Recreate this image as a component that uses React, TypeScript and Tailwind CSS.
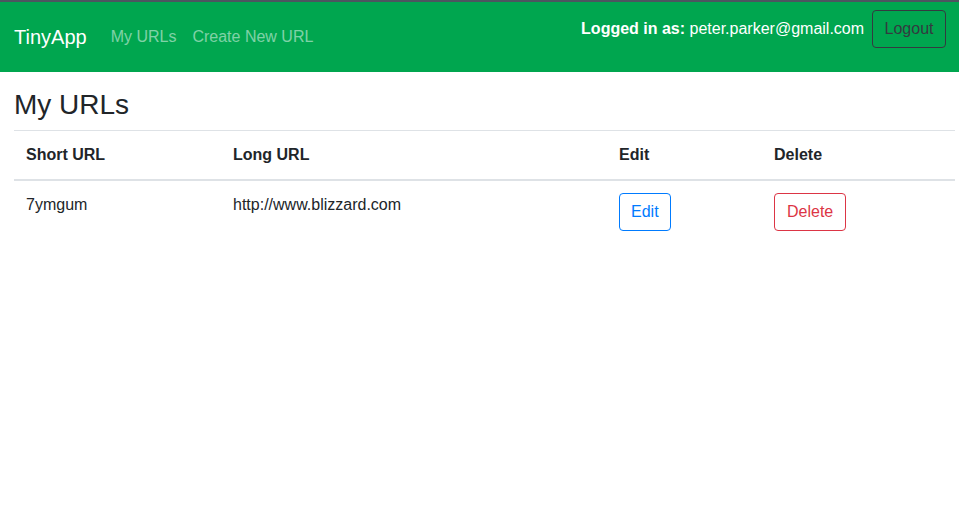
export default function App() {
  const rows = [{ short: "7ymgum", long: "http://www.blizzard.com" }]

  return (
    <div className="min-h-screen bg-white text-[#212529] font-['Liberation_Sans',Arial,sans-serif] text-base leading-6">
      <nav className="h-[72px] bg-[#00a64f] border-t-2 border-[#4d5560] pl-[14px] pr-[13px] flex justify-between">
        <div className="flex items-center self-center">
          <span className="text-white text-xl leading-[30px] py-[5px] mr-4">TinyApp</span>
          <a className="px-2 py-2 text-white/50">My URLs</a>
          <a className="px-2 py-2 text-white/50">Create New URL</a>
        </div>
        <div className="flex items-center pt-[8px] self-start gap-2">
          <span className="text-white">
            <b>Logged in as:</b> peter.parker@gmail.com
          </span>
          <button className="h-[38px] px-[11.5px] border border-[#343a40] rounded text-[#343a40]">
            Logout
          </button>
        </div>
      </nav>

      <main className="px-[14px]">
        <h3 className="text-[28px] leading-[33.6px] font-normal mt-4 mb-2">My URLs</h3>
        <table className="w-[941px] border-collapse text-left">
          <thead>
            <tr>
              <th className="w-[207px] p-3 font-bold border-t border-b-2 border-[#dee2e6]">Short URL</th>
              <th className="w-[386px] p-3 font-bold border-t border-b-2 border-[#dee2e6]">Long URL</th>
              <th className="w-[155px] p-3 font-bold border-t border-b-2 border-[#dee2e6]">Edit</th>
              <th className="p-3 font-bold border-t border-b-2 border-[#dee2e6]">Delete</th>
            </tr>
          </thead>
          <tbody>
            {rows.map((r) => (
              <tr key={r.short}>
                <td className="p-3 align-top">{r.short}</td>
                <td className="p-3 align-top">{r.long}</td>
                <td className="p-3 align-top">
                  <button className="h-[38px] px-[11px] border border-[#007bff] rounded text-[#007bff]">Edit</button>
                </td>
                <td className="p-3 align-top">
                  <button className="h-[38px] px-3 border border-[#dc3545] rounded text-[#dc3545]">Delete</button>
                </td>
              </tr>
            ))}
          </tbody>
        </table>
      </main>
    </div>
  )
}
